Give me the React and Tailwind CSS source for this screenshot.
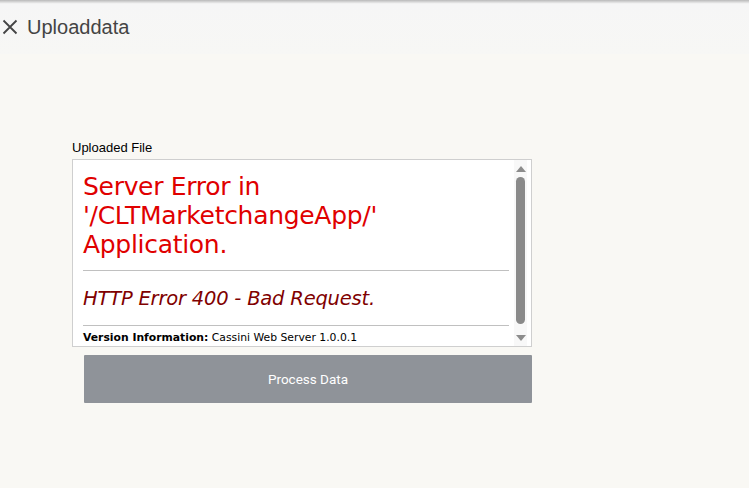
const App = () => {
  return (
    <div className="w-[749px] h-[488px] bg-[#f9f8f4] overflow-hidden font-['Liberation_Sans',Arial,sans-serif]">
      {/* Header */}
      <div className="h-[54px] bg-gradient-to-b from-[#b9b9b9] via-[#f6f6f6] via-[7%] to-[#f7f7f5] flex items-center pl-[2px]">
        <svg width="16" height="16" viewBox="0 0 16 16" className="text-[#444]">
          <path d="M1.5 1.5 L14.5 14.5 M14.5 1.5 L1.5 14.5" stroke="currentColor" strokeWidth="1.8" fill="none" />
        </svg>
        <span className="ml-[9px] text-[20px] text-[#444] leading-none">Uploaddata</span>
      </div>

      {/* Upload section */}
      <div className="pl-[72px] pt-[87px]">
        <div className="text-[13px] text-black leading-none mb-[5px]">Uploaded File</div>

        <div className="w-[460px] h-[188px] border border-[#cfcfcf] bg-white flex">
          <div className="flex-1 overflow-hidden pl-[10px] pr-[5px] pt-[12px] font-['DejaVu_Sans',Verdana,sans-serif]">
            <h1 className="text-[25px] leading-[29px] text-[#e00000] font-normal tracking-[-0.3px]">
              Server Error in '/CLTMarketchangeApp/' Application.
            </h1>
            <hr className="mt-[11px] border-t border-[#c0c0c0]" />
            <h2 className="mt-[16px] text-[19.5px] leading-[24px] italic text-[#800000] tracking-[-0.2px]">
              HTTP Error 400 - Bad Request.
            </h2>
            <hr className="mt-[14px] border-t border-[#c0c0c0]" />
            <div className="mt-[5px] text-[10.8px] leading-[14px] text-black">
              <b>Version Information:</b> Cassini Web Server 1.0.0.1
            </div>
          </div>

          {/* Scrollbar */}
          <div className="w-[13px] mr-[4px] bg-[#f8f8f8] flex flex-col items-center pt-[6px] pb-[5px]">
            <div className="w-0 h-0 border-l-[5px] border-r-[5px] border-b-[6px] border-l-transparent border-r-transparent border-b-[#8c8c8c]" />
            <div className="w-[9px] flex-1 mt-[5px] mb-[11px] rounded-full bg-[#8a8a8a]" />
            <div className="w-0 h-0 border-l-[5px] border-r-[5px] border-t-[6px] border-l-transparent border-r-transparent border-t-[#8c8c8c]" />
          </div>
        </div>

        <button
          type="button"
          className="ml-[12px] mt-[8px] w-[448px] h-[48px] bg-[#8f9399] text-white text-[13.5px] font-['Roboto',Arial,sans-serif] rounded-[1px]"
        >
          Process Data
        </button>
      </div>
    </div>
  );
};

export default App;
